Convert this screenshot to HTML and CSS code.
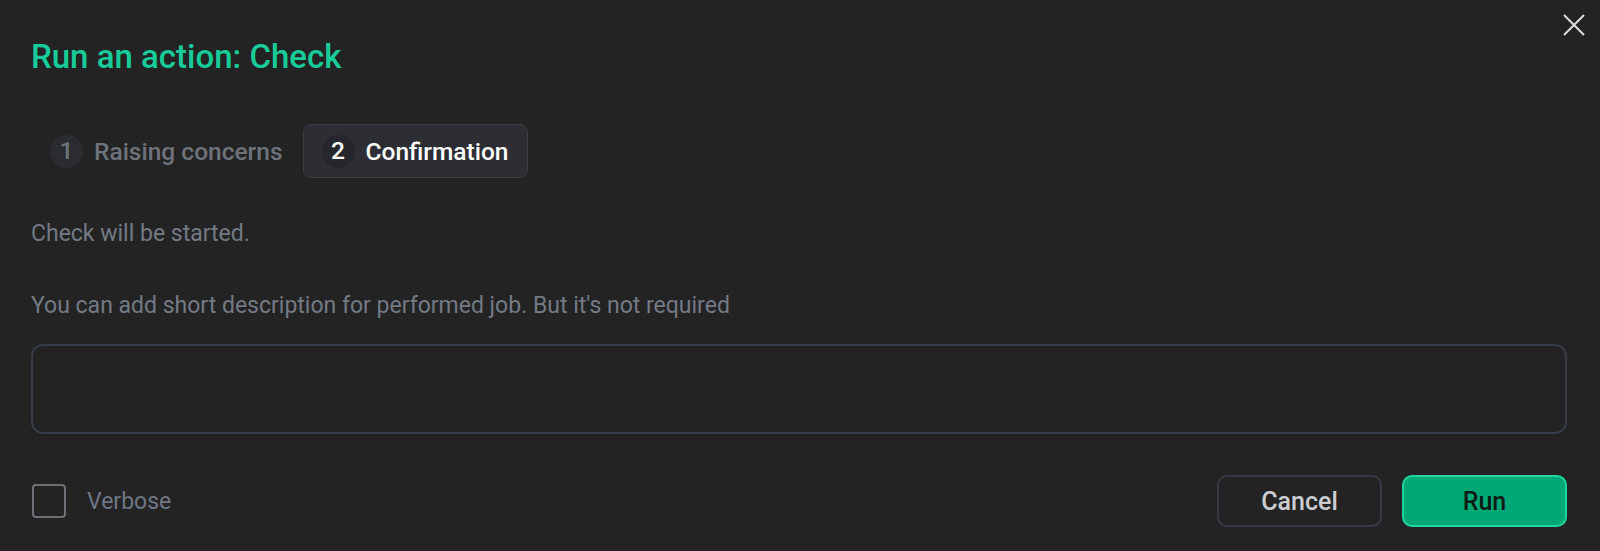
FILE: index.html
```html
<!DOCTYPE html>
<html lang="en">
<head>
<meta charset="utf-8">
<title>Run an action: Check</title>
<link rel="stylesheet" href="styles.css">
</head>
<body>
<div class="dialog">
  <button class="close" aria-label="Close">
    <svg width="22" height="22" viewBox="0 0 22 22"><path d="M1 1 L21 21 M21 1 L1 21" stroke="#dcdcdc" stroke-width="2" fill="none"/></svg>
  </button>
  <h1 class="title">Run an action: Check</h1>
  <div class="steps">
    <div class="step"><span class="num">1</span><span class="label">Raising concerns</span></div>
    <div class="step active"><span class="num">2</span><span class="label">Confirmation</span></div>
  </div>
  <p class="msg">Check will be started.</p>
  <p class="hint">You can add short description for performed job. But it's not required</p>
  <textarea class="desc"></textarea>
  <div class="footer">
    <label class="check"><span class="box"></span><span class="check-label">Verbose</span></label>
    <div class="actions">
      <button class="btn cancel">Cancel</button>
      <button class="btn run">Run</button>
    </div>
  </div>
</div>
</body>
</html>
```
FILE: styles.css
```css
html, body {
  margin: 0;
  padding: 0;
  background: #232323;
}
body {
  font-family: Roboto, "Liberation Sans", sans-serif;
}
.dialog {
  position: relative;
  box-sizing: border-box;
  width: 1600px;
  height: 551px;
  padding: 37px 33px 24px 31px;
  display: flex;
  flex-direction: column;
  background: #232323;
}
.close {
  position: absolute;
  top: 14px;
  right: 15px;
  width: 22px;
  height: 22px;
  padding: 0;
  border: 0;
  background: none;
  display: flex;
}
.title {
  margin: 0;
  font-size: 33px;
  line-height: 40px;
  font-weight: 500;
  color: #17cc98;
}
.steps {
  margin-top: 47px;
  display: flex;
  gap: 1px;
}
.step {
  box-sizing: border-box;
  height: 54px;
  display: flex;
  align-items: center;
  gap: 11px;
  padding: 0 18px;
  border: 1px solid transparent;
  border-radius: 8px;
  font-size: 24.5px;
  font-weight: 500;
  color: #6e737b;
}
.step .num {
  width: 33px;
  height: 33px;
  border-radius: 50%;
  background: #2b2c30;
  display: flex;
  align-items: center;
  justify-content: center;
  font-size: 24.5px;
  line-height: 1;
}
.step.active {
  background: #2d2e34;
  border-color: #3a3c43;
  color: #ffffff;
}
.step.active .num {
  background: #26272c;
}
.msg, .hint {
  margin: 40px 0 0;
  font-size: 23px;
  line-height: 32px;
  color: #737a85;
}
.desc {
  margin-top: 22px;
  box-sizing: border-box;
  width: 100%;
  height: 90px;
  border: 2px solid #363d48;
  border-radius: 12px;
  background: transparent;
  resize: none;
  display: block;
}
.footer {
  margin-top: 41px;
  height: 52px;
  display: flex;
  align-items: center;
  justify-content: space-between;
}
.check {
  display: flex;
  align-items: center;
  gap: 21px;
  font-size: 23px;
  color: #6f7785;
  padding-left: 1px;
}
.box {
  box-sizing: border-box;
  width: 34px;
  height: 34px;
  border: 2px solid #6c6f75;
  border-radius: 4px;
}
.actions {
  display: flex;
  gap: 20px;
}
.btn {
  box-sizing: border-box;
  width: 165px;
  height: 52px;
  border-radius: 10px;
  font-family: Roboto, "Liberation Sans", sans-serif;
  font-size: 25px;
  font-weight: 500;
  padding: 0;
}
.cancel {
  background: transparent;
  border: 2px solid #343a44;
  color: #cbcdd1;
}
.run {
  background: #00a875;
  border: 2px solid #1fd6a1;
  color: #0c1c15;
}
```
